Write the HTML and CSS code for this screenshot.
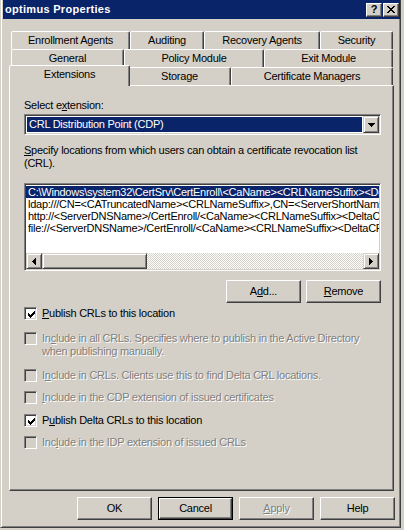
FILE: index.html
```html
<!DOCTYPE html>
<html>
<head>
<meta charset="utf-8">
<link rel="stylesheet" href="styles.css">
</head>
<body>
<div class="window">
  <div class="titlebar">
    <div class="title">optimus Properties</div>
    <div class="capbtn help">?</div>
    <div class="capbtn close">
      <svg width="8" height="7" viewBox="0 0 8 7" shape-rendering="crispEdges">
        <rect x="0" y="0" width="2" height="1"/><rect x="6" y="0" width="2" height="1"/>
        <rect x="1" y="1" width="2" height="1"/><rect x="5" y="1" width="2" height="1"/>
        <rect x="2" y="2" width="4" height="1"/>
        <rect x="3" y="3" width="2" height="1"/>
        <rect x="2" y="4" width="4" height="1"/>
        <rect x="1" y="5" width="2" height="1"/><rect x="5" y="5" width="2" height="1"/>
        <rect x="0" y="6" width="2" height="1"/><rect x="6" y="6" width="2" height="1"/>
      </svg>
    </div>
  </div>
  <div class="client">
    <div class="tabs">
      <div class="tabrow">
        <div class="tab" style="width:119px">Enrollment Agents</div>
        <div class="tab" style="width:74px">Auditing</div>
        <div class="tab" style="width:116px">Recovery Agents</div>
        <div class="tab" style="width:73px">Security</div>
      </div>
      <div class="tabrow">
        <div class="tab" style="width:113px">General</div>
        <div class="tab" style="width:140px">Policy Module</div>
        <div class="tab" style="width:129px">Exit Module</div>
      </div>
      <div class="tabrow">
        <div class="tab sel" style="width:121px">Extensions</div>
        <div class="tab" style="width:103px">Storage</div>
        <div class="tab" style="width:162px">Certificate Managers</div>
      </div>
    </div>
    <div class="panel">
      <div class="label">Select e<u>x</u>tension:</div>
      <div class="combo">
        <div class="combo-value">CRL Distribution Point (CDP)</div>
        <div class="raised dropbtn">
          <svg width="7" height="4" viewBox="0 0 7 4" shape-rendering="crispEdges">
            <rect x="0" y="0" width="7" height="1"/><rect x="1" y="1" width="5" height="1"/>
            <rect x="2" y="2" width="3" height="1"/><rect x="3" y="3" width="1" height="1"/>
          </svg>
        </div>
      </div>
      <p class="desc"><u>S</u>pecify locations from which users can obtain a certificate revocation list (CRL).</p>
      <div class="listbox">
        <div class="items">
          <div class="item sel">C:\Windows\system32\CertSrv\CertEnroll\&lt;CaName&gt;&lt;CRLNameSuffix&gt;&lt;DeltaCRLAllowed&gt;.crl</div>
          <div class="item">ldap:///CN=&lt;CATruncatedName&gt;&lt;CRLNameSuffix&gt;,CN=&lt;ServerShortName&gt;,CN=CDP,CN=Public Key Services</div>
          <div class="item">http://&lt;ServerDNSName&gt;/CertEnroll/&lt;CaName&gt;&lt;CRLNameSuffix&gt;&lt;DeltaCRLAllowed&gt;.crl</div>
          <div class="item">file://&lt;ServerDNSName&gt;/CertEnroll/&lt;CaName&gt;&lt;CRLNameSuffix&gt;&lt;DeltaCRLAllowed&gt;.crl</div>
        </div>
        <div class="hscroll">
          <div class="raised sbtn">
            <svg width="4" height="7" viewBox="0 0 4 7" shape-rendering="crispEdges">
              <rect x="0" y="3" width="1" height="1"/><rect x="1" y="2" width="1" height="3"/>
              <rect x="2" y="1" width="1" height="5"/><rect x="3" y="0" width="1" height="7"/>
            </svg>
          </div>
          <div class="raised thumb"></div>
          <div class="track"></div>
          <div class="raised sbtn">
            <svg width="4" height="7" viewBox="0 0 4 7" shape-rendering="crispEdges">
              <rect x="3" y="3" width="1" height="1"/><rect x="2" y="2" width="1" height="3"/>
              <rect x="1" y="1" width="1" height="5"/><rect x="0" y="0" width="1" height="7"/>
            </svg>
          </div>
        </div>
      </div>
      <div class="actions">
        <div class="btn">A<u>d</u>d...</div>
        <div class="btn"><u>R</u>emove</div>
      </div>
      <div class="check r1">
        <div class="box checked"><svg width="7" height="7" viewBox="0 0 7 7" shape-rendering="crispEdges"><rect x="0" y="2" width="1" height="3"/><rect x="1" y="3" width="1" height="3"/><rect x="2" y="4" width="1" height="3"/><rect x="3" y="3" width="1" height="3"/><rect x="4" y="2" width="1" height="3"/><rect x="5" y="1" width="1" height="3"/><rect x="6" y="0" width="1" height="3"/></svg></div>
        <div class="ctext"><u>P</u>ublish CRLs to this location</div>
      </div>
      <div class="check r2 disabled">
        <div class="box"></div>
        <div class="ctext">In<u>c</u>lude in all CRLs. Specifies where to publish in the Active Directory<br>when publishing manually.</div>
      </div>
      <div class="check r3 disabled">
        <div class="box"></div>
        <div class="ctext">I<u>n</u>clude in CRLs. Clients use this to find Delta CRL locations.</div>
      </div>
      <div class="check r4 disabled">
        <div class="box"></div>
        <div class="ctext"><u>I</u>nclude in the CDP extension of issued certificates</div>
      </div>
      <div class="check r5">
        <div class="box checked"><svg width="7" height="7" viewBox="0 0 7 7" shape-rendering="crispEdges"><rect x="0" y="2" width="1" height="3"/><rect x="1" y="3" width="1" height="3"/><rect x="2" y="4" width="1" height="3"/><rect x="3" y="3" width="1" height="3"/><rect x="4" y="2" width="1" height="3"/><rect x="5" y="1" width="1" height="3"/><rect x="6" y="0" width="1" height="3"/></svg></div>
        <div class="ctext">P<u>u</u>blish Delta CRLs to this location</div>
      </div>
      <div class="check r6 disabled">
        <div class="box"></div>
        <div class="ctext">Inc<u>l</u>ude in the IDP extension of issued CRLs</div>
      </div>
    </div>
    <div class="footer">
      <div class="btn">OK</div>
      <div class="btn default"><span>Cancel</span></div>
      <div class="btn disabled"><u>A</u>pply</div>
      <div class="btn">Help</div>
    </div>
  </div>
</div>
</body>
</html>
```

FILE: styles.css
```css
* { box-sizing: border-box; }
html, body { margin: 0; padding: 0; }
body {
  background: #d4d0c8;
  width: 404px;
  height: 530px;
  overflow: hidden;
  font-family: "Liberation Sans", Arial, sans-serif;
  font-size: 11px;
  letter-spacing: -0.25px;
  color: #000;
}
u { text-decoration: underline; text-underline-offset: 1px; }

.window {
  margin-top: -3px;
  width: 401px;
  height: 531px;
  border: 1px solid;
  border-color: #d4d0c8 #404040 #404040 #d4d0c8;
  box-shadow: inset 1px 1px #fff, inset -1px -1px #808080;
  padding: 2px;
  display: flex;
  flex-direction: column;
}

.titlebar {
  height: 19px;
  margin-right: -2px;
  background: #0a246a;
  display: flex;
  align-items: center;
  padding: 0 1px 0 2px;
  gap: 1px;
}
.title {
  flex: 1;
  color: #fff;
  font-weight: bold;
  letter-spacing: 0.3px;
  line-height: 19px;
}
.capbtn {
  width: 16px;
  height: 14px;
  background: #d4d0c8;
  border: 1px solid;
  border-color: #fff #404040 #404040 #fff;
  box-shadow: inset -1px -1px #808080;
  display: flex;
  align-items: center;
  justify-content: center;
}
.capbtn.help {
  font-weight: bold;
  font-size: 11px;
  line-height: 12px;
  padding-bottom: 1px;
}
.capbtn svg { fill: #000; }

.client {
  flex: 1;
  display: flex;
  flex-direction: column;
  padding: 12px 3px 0 6px;
}

.tabs { margin-left: 2px; width: 382px; }
.tabrow { display: flex; height: 18px; }
.tab {
  height: 18px;
  border: 1px solid;
  border-bottom: none;
  border-color: #fff #404040 transparent #fff;
  box-shadow: inset -1px 0 #808080;
  border-radius: 2px 2px 0 0;
  background: #d4d0c8;
  text-align: center;
  padding-top: 2px;
  line-height: 13px;
  white-space: nowrap;
}
.tab.sel {
  margin: -2px -2px -1px -2px;
  height: 21px;
  position: relative;
  z-index: 1;
}

.panel {
  width: 385px;
  height: 406px;
  border: 1px solid;
  border-color: #fff #404040 #404040 #fff;
  box-shadow: inset -1px -1px #808080;
  padding: 13px 0 0 14px;
}

.label { line-height: 13px; height: 13px; }

.combo {
  margin-top: 2px;
  width: 357px;
  height: 21px;
  border: 1px solid;
  border-color: #808080 #fff #fff #808080;
  box-shadow: inset 1px 1px #404040, inset -1px -1px #d4d0c8;
  background: #fff;
  padding: 1px 1px 1px 2px;
  display: flex;
}
.combo-value {
  flex: 1;
  margin: 1px 1px 1px 0;
  background: #0a246a;
  color: #fff;
  line-height: 15px;
  padding-left: 2px;
}
.raised {
  background: #d4d0c8;
  border: 1px solid;
  border-color: #d4d0c8 #404040 #404040 #d4d0c8;
  box-shadow: inset 1px 1px #fff, inset -1px -1px #808080;
}
.dropbtn {
  width: 16px;
  height: 17px;
  display: flex;
  align-items: center;
  justify-content: center;
}
.dropbtn svg, .sbtn svg { fill: #000; }

.desc {
  margin: 9px 0 0 0;
  width: 345px;
  line-height: 13px;
}

.listbox {
  margin-top: 13px;
  width: 357px;
  height: 88px;
  border: 1px solid;
  border-color: #808080 #fff #fff #808080;
  box-shadow: inset 1px 1px #404040, inset -1px -1px #d4d0c8;
  background: #fff;
  padding: 1px;
  display: flex;
  flex-direction: column;
}
.items { flex: 1; padding-top: 1px; overflow: hidden; }
.item {
  height: 12px;
  line-height: 12px;
  padding-left: 2px;
  white-space: nowrap;
  overflow: hidden;
}
.item.sel { background: #0a246a; color: #fff; }

.hscroll { display: flex; height: 16px; }
.sbtn {
  width: 16px;
  height: 16px;
  display: flex;
  align-items: center;
  justify-content: center;
}
.thumb { width: 105px; height: 16px; }
.track {
  flex: 1;
  height: 16px;
  background: repeating-conic-gradient(#fff 0 25%, #d4d0c8 0 50%) 0 0 / 2px 2px;
}

.actions {
  margin-top: 9px;
  width: 357px;
  display: flex;
  justify-content: flex-end;
  gap: 5px;
}
.btn {
  width: 75px;
  height: 23px;
  border: 1px solid;
  border-color: #fff #404040 #404040 #fff;
  box-shadow: inset -1px -1px #808080;
  background: #d4d0c8;
  display: flex;
  align-items: center;
  justify-content: center;
  line-height: 13px;
}
.btn.default {
  border: 1px solid #000;
  box-shadow: none;
  padding: 0;
}
.btn.default span {
  width: 100%;
  height: 100%;
  border: 1px solid;
  border-color: #fff #404040 #404040 #fff;
  box-shadow: inset -1px -1px #808080;
  display: flex;
  align-items: center;
  justify-content: center;
}
.btn.disabled { color: #808080; text-shadow: 1px 1px 0 #fff; }

.check { display: flex; align-items: flex-start; gap: 5px; line-height: 13px; }
.check.r1 { margin-top: 4px; }
.check.r2 { margin-top: 12px; }
.check.r3 { margin-top: 11px; }
.check.r4 { margin-top: 9px; }
.check.r5 { margin-top: 10px; }
.check.r6 { margin-top: 9px; }
.box {
  width: 13px;
  height: 13px;
  flex: none;
  border: 1px solid;
  border-color: #808080 #fff #fff #808080;
  box-shadow: inset 1px 1px #404040, inset -1px -1px #d4d0c8;
  background: #fff;
  padding: 2px;
}
.box svg { display: block; fill: #000; margin: 1px 0 0 1px; }
.check.disabled .box { background: #d4d0c8; }
.check.disabled .ctext { color: #808080; text-shadow: 1px 1px 0 #fff; }

.footer {
  margin-top: 6px;
  display: flex;
  justify-content: flex-end;
  gap: 6px;
}
```
